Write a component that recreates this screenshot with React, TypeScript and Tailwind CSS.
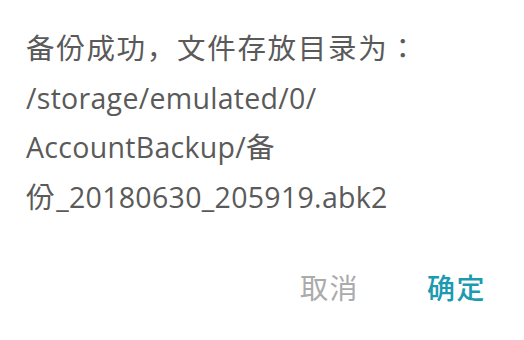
export default function App() {
  return (
    <div
      className="w-[524px] h-[340px] bg-white flex flex-col overflow-hidden"
      style={{ fontFamily: '"Open Sans", "Noto Sans CJK JP", sans-serif' }}
    >
      <div className="pl-[26px] pr-[20px] pt-[24px] text-[28.5px] leading-[49.5px] text-[#5a5a5a] tracking-[0.3px]">
        <div className="tracking-[1.7px]">备份成功，文件存放目录为：</div>
        <div>/storage/emulated/0/</div>
        <div>
          AccountBackup/<span className="tracking-[1.7px]">备</span>
        </div>
        <div>
          <span className="tracking-[1.7px]">份</span>_20180630_205919.abk2
        </div>
      </div>
      <div className="flex justify-end items-center gap-[68px] pr-[38px] mt-[46px] text-[28px] leading-[40px]">
        <button className="text-[#ababab] tracking-[1.5px]">取消</button>
        <button className="text-[#1c9ab0] font-medium tracking-[1.5px]">确定</button>
      </div>
    </div>
  );
}
